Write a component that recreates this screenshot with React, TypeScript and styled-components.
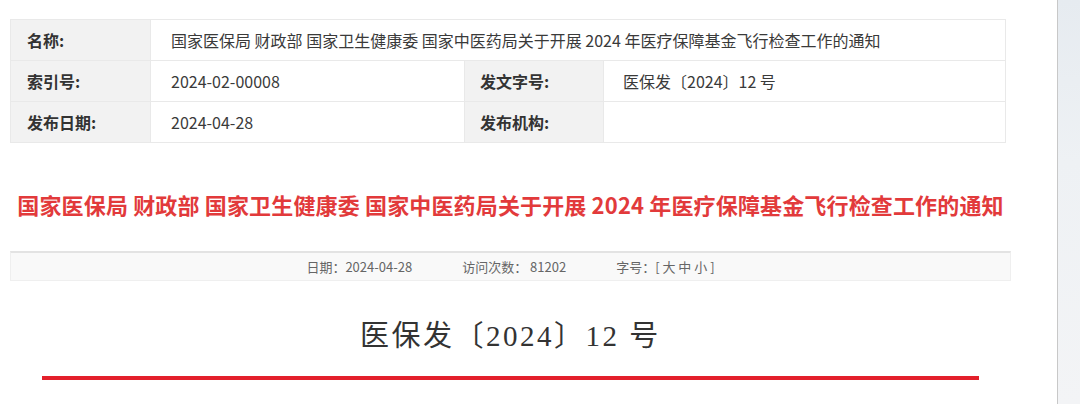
import styled, { createGlobalStyle } from "styled-components";

const Global = createGlobalStyle`
  html, body {
    margin: 0;
    padding: 0;
    background: #fff;
  }
  body {
    font-family: "Noto Sans CJK SC", "Noto Sans", sans-serif;
    color: #333;
  }
`;

const Page = styled.div`
  display: flex;
  height: 404px;
  overflow: hidden;
`;

const Main = styled.main`
  flex: 1;
  padding: 19px 0 0 10px;
`;

const Content = styled.div`
  width: 1001px;
  display: flex;
  flex-direction: column;
`;

const Side = styled.aside`
  width: 22px;
  border-left: 1px solid #c8c8c8;
  background: linear-gradient(180deg, #e6ebf0 0%, #eef1f4 40%, #f3f4f6 100%);
`;

const Table = styled.div`
  width: 996px;
  box-sizing: border-box;
  display: grid;
  grid-template-columns: 139px 313px 138px 1fr;
  grid-auto-rows: 40px;
  gap: 1px;
  padding: 1px;
  background: #e9e9e9;
`;

const Cell = styled.div<{ $label?: boolean; $span?: number; $pad?: number }>`
  display: flex;
  align-items: center;
  padding-left: ${(p) => p.$pad ?? 16}px;
  background: ${(p) => (p.$label ? "#f2f2f2" : "#fff")};
  font-size: 16px;
  font-weight: ${(p) => (p.$label ? 700 : 400)};
  color: ${(p) => (p.$label ? "#333" : "#3a3a3a")};
  white-space: nowrap;
  ${(p) => (p.$span ? `grid-column: span ${p.$span};` : "")}
`;

const Title = styled.h1`
  margin: 46px 0 0;
  line-height: 30px;
  text-align: center;
  font-size: 22px;
  font-weight: 700;
  letter-spacing: 0.15px;
  color: #e23a3b;
  white-space: nowrap;
`;

const InfoBar = styled.div`
  margin-top: 32px;
  height: 30px;
  box-sizing: border-box;
  display: flex;
  justify-content: center;
  align-items: center;
  gap: 50px;
  background: #f9f9f9;
  border: 1px solid #efefef;
  border-top: 2px solid #e3e3e3;
  font-size: 13px;
  color: #666;
`;

const DocNo = styled.div`
  margin-top: 35px;
  line-height: 40px;
  text-align: center;
  font-family: "Liberation Serif", "Noto Sans CJK SC", serif;
  font-size: 29px;
  letter-spacing: 2.5px;
  color: #333;
`;

const RedRule = styled.hr`
  margin: 20px auto 0;
  width: 937px;
  height: 4px;
  border: none;
  background: #e3202b;
`;

export default function App() {
  return (
    <>
      <Global />
      <Page>
        <Main>
          <Content>
            <Table>
              <Cell $label>名称:</Cell>
              <Cell $span={3} $pad={20}>
                国家医保局 财政部 国家卫生健康委 国家中医药局关于开展 2024 年医疗保障基金飞行检查工作的通知
              </Cell>
              <Cell $label>索引号:</Cell>
              <Cell $pad={20}>2024-02-00008</Cell>
              <Cell $label $pad={15}>发文字号:</Cell>
              <Cell $pad={19}>医保发〔2024〕12 号</Cell>
              <Cell $label>发布日期:</Cell>
              <Cell $pad={20}>2024-04-28</Cell>
              <Cell $label $pad={15}>发布机构:</Cell>
              <Cell />
            </Table>
            <Title>
              国家医保局 财政部 国家卫生健康委 国家中医药局关于开展 2024 年医疗保障基金飞行检查工作的通知
            </Title>
            <InfoBar>
              <span>日期：2024-04-28</span>
              <span>访问次数： 81202</span>
              <span>字号：[ 大 中 小 ]</span>
            </InfoBar>
            <DocNo>医保发〔2024〕12 号</DocNo>
            <RedRule />
          </Content>
        </Main>
        <Side />
      </Page>
    </>
  );
}
